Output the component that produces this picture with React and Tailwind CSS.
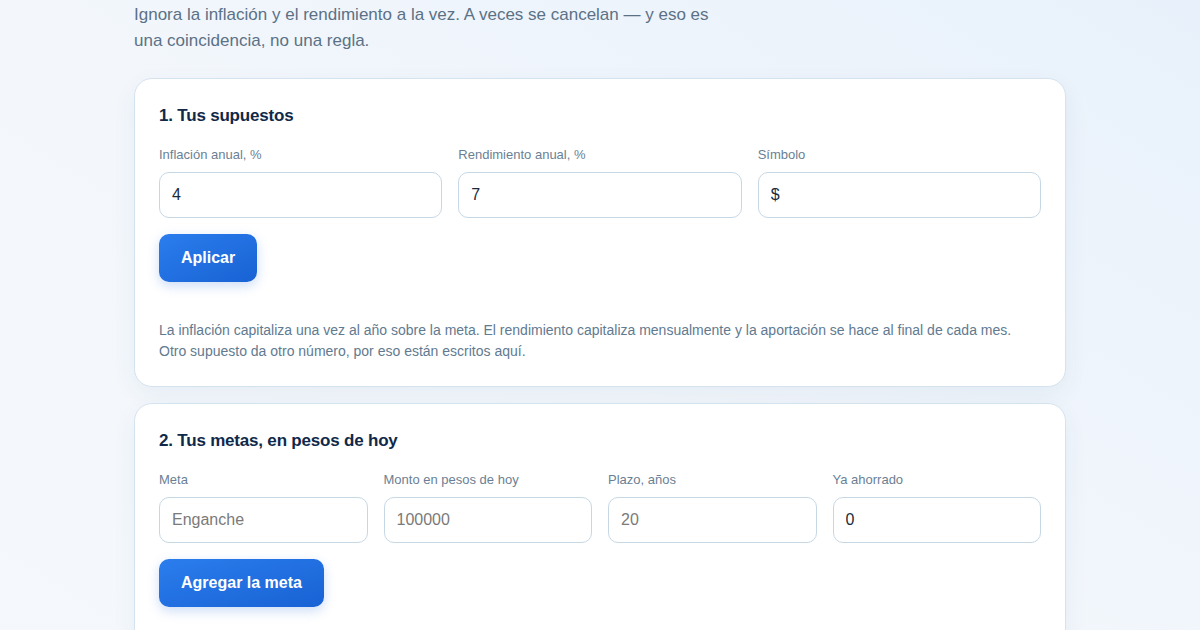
import React from 'react';

function Field({ label, value, placeholder }) {
  return (
    <label className="flex flex-col">
      <span className="text-[13px] leading-[19px] text-[#6a7f94] mb-[8px]">{label}</span>
      <input
        defaultValue={value}
        placeholder={placeholder}
        className="h-[46px] w-full rounded-[10px] border border-[#c6d8e6] bg-white px-[12px] text-[16px] text-[#1c2b3b] placeholder:text-[#7a7a7a] outline-none"
      />
    </label>
  );
}

function Card({ title, children }) {
  return (
    <section className="rounded-[18px] border border-[#d5e3ee] bg-white px-[24px] pt-[25px] pb-[24px] shadow-[0_8px_24px_rgba(20,60,110,0.06)]">
      <h2 className="text-[17px] leading-[24px] font-bold text-[#10294a] tracking-[-0.2px] mb-[17px]">{title}</h2>
      {children}
    </section>
  );
}

function Button({ children }) {
  return (
    <button className="h-[48px] rounded-[10px] px-[22px] text-[16px] font-bold text-white bg-gradient-to-br from-[#2b7ded] to-[#1862d4] shadow-[0_4px_12px_rgba(24,98,212,0.22)]">
      {children}
    </button>
  );
}

export default function App() {
  return (
    <div
      className="min-h-screen w-full bg-gradient-to-bl from-[#e8f1fb] via-[#f3f7fc] to-[#f5f9fd] overflow-hidden"
      style={{ fontFamily: '"Liberation Sans", Arial, sans-serif' }}
    >
      <div className="mx-auto w-[932px] pt-[2px]">
        <p className="text-[17px] leading-[26px] text-[#5b7186] max-w-[590px] mb-[24px]">
          Ignora la inflación y el rendimiento a la vez. A veces se cancelan — y eso es una coincidencia, no una regla.
        </p>

        <div className="flex flex-col gap-[16px]">
          <Card title="1. Tus supuestos">
            <div className="grid grid-cols-3 gap-[16px]">
              <Field label="Inflación anual, %" value="4" />
              <Field label="Rendimiento anual, %" value="7" />
              <Field label="Símbolo" value="$" />
            </div>
            <div className="mt-[16px]">
              <Button>Aplicar</Button>
            </div>
            <p className="mt-[38px] text-[14px] leading-[21px] text-[#627a90]">
              La inflación capitaliza una vez al año sobre la meta. El rendimiento capitaliza mensualmente y la aportación se hace al final de cada mes.
              <br />
              Otro supuesto da otro número, por eso están escritos aquí.
            </p>
          </Card>

          <Card title="2. Tus metas, en pesos de hoy">
            <div className="grid grid-cols-4 gap-[16px]">
              <Field label="Meta" placeholder="Enganche" />
              <Field label="Monto en pesos de hoy" placeholder="100000" />
              <Field label="Plazo, años" placeholder="20" />
              <Field label="Ya ahorrado" value="0" />
            </div>
            <div className="mt-[16px]">
              <Button>Agregar la meta</Button>
            </div>
            <div className="h-[120px]" />
          </Card>
        </div>
      </div>
    </div>
  );
}
